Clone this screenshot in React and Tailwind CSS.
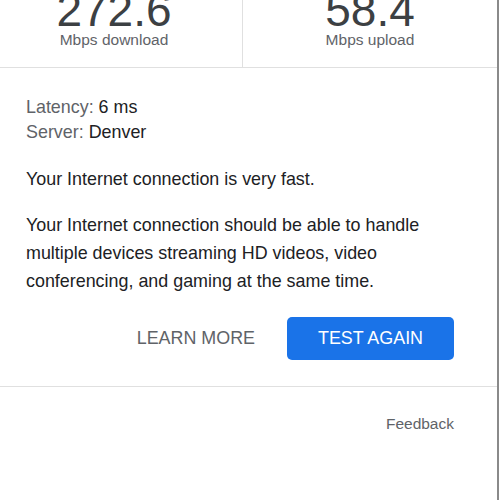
export default function App() {
  const font = { fontFamily: '"Liberation Sans", Arial, sans-serif' };
  return (
    <div className="w-[500px] h-[500px] overflow-hidden bg-white" style={font}>
      <div className="w-[499px] h-[500px] border-r-2 border-[#8a8a8a] flex flex-col">
        <div className="grid grid-cols-[243px_1fr] border-b border-[#e0e0e0]">
          <div className="flex flex-col items-center pr-[14px] border-r border-[#e0e0e0] pb-[17px]">
            <div className="text-[46px] leading-[40px] text-[#3c4043] -mt-[10px]">272.6</div>
            <div className="text-[15.5px] leading-[20px] text-[#5f6368]">Mbps download</div>
          </div>
          <div className="flex flex-col items-center pb-[17px]">
            <div className="text-[46px] leading-[40px] text-[#3c4043] -mt-[10px]">58.4</div>
            <div className="text-[15.5px] leading-[20px] text-[#5f6368]">Mbps upload</div>
          </div>
        </div>
        <div className="pl-[26px] pr-[43px] pt-[27px] pb-[26px] border-b border-[#e0e0e0] text-[17.9px] text-[#202124]">
          <div className="leading-[25px]"><span className="text-[#5f6368]">Latency:</span> 6 ms</div>
          <div className="leading-[25px]"><span className="text-[#5f6368]">Server:</span> Denver</div>
          <p className="leading-[28px] mt-[20px]">Your Internet connection is very fast.</p>
          <p className="leading-[28px] mt-[18px]">Your Internet connection should be able to handle multiple devices streaming HD videos, video conferencing, and gaming at the same time.</p>
          <div className="flex justify-end items-center gap-[16px] mt-[22px]">
            <button className="h-[43px] px-[16px] text-[#5f6368] text-[17.9px]">LEARN MORE</button>
            <button className="h-[43px] w-[167px] rounded-[5px] bg-[#1a73e8] text-white text-[17.9px]">TEST AGAIN</button>
          </div>
        </div>
        <div className="flex justify-end pr-[43px] pt-[27px]">
          <span className="text-[15.5px] leading-[20px] text-[#5f6368]">Feedback</span>
        </div>
      </div>
    </div>
  );
}
